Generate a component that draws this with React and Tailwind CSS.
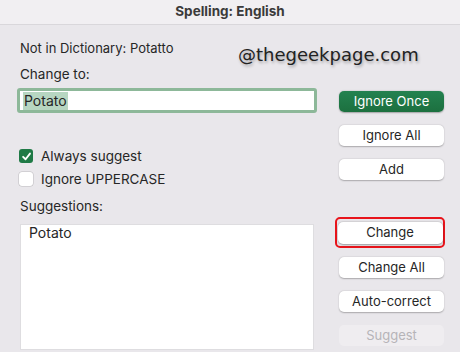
import React from "react";

const font = { fontFamily: "Inter, 'Liberation Sans', Arial, sans-serif" };

function Btn({ children, className = "" }) {
  return (
    <div
      className={`h-[21px] w-[105px] rounded-[5px] bg-white flex items-center justify-center text-[13px] text-[#262626] shadow-[0_0.5px_1.5px_rgba(0,0,0,0.28)] ${className}`}
    >
      {children}
    </div>
  );
}

export default function App() {
  return (
    <div
      className="relative w-[460px] h-[352px] overflow-hidden bg-[#e9e7eb] text-[#262626]"
      style={font}
    >
      {/* title bar */}
      <div className="h-[25px] bg-[#f1eff2] border-b border-[#d9d7db] flex items-center justify-center">
        <span className="text-[13.5px] font-bold text-[#3a3a3a] leading-none">Spelling: English</span>
      </div>

      <div className="flex">
        {/* left column */}
        <div className="ml-[20px] w-[297px] flex flex-col">
          <div className="mt-[15px] text-[13px] leading-[16px]">Not in Dictionary: Potatto</div>
          <div className="mt-[10px] text-[13.5px] leading-[16px]">Change to:</div>
          <div className="mt-[6px] -ml-[3px] w-[300px] h-[25px] rounded-[3px] border-[3px] border-[#8db899] bg-white flex items-center pl-[3px]">
            <span className="bg-[#b7d6c1] text-[14px] leading-[18px] px-[1px]">Potato</span>
          </div>
          <div className="mt-[35px] flex items-center h-[16px]">
            <div className="w-[14px] h-[14px] -ml-[1px] rounded-[3px] bg-[#1f7a46] flex items-center justify-center">
              <svg width="11" height="11" viewBox="0 0 12 12">
                <path d="M2.3 6.3 L5 9 L9.8 2.8" fill="none" stroke="white" strokeWidth="2" strokeLinecap="round" strokeLinejoin="round" />
              </svg>
            </div>
            <span className="ml-[8px] text-[13.5px]">Always suggest</span>
          </div>
          <div className="mt-[7px] flex items-center h-[16px]">
            <div className="w-[14px] h-[14px] -ml-[1px] rounded-[3px] bg-white shadow-[0_0_0_0.5px_rgba(0,0,0,0.2)]" />
            <span className="ml-[8px] text-[13.5px]">Ignore UPPERCASE</span>
          </div>
          <div className="mt-[11px] text-[13.5px] leading-[16px]">Suggestions:</div>
          <div className="mt-[10px] w-[294px] h-[126px] bg-white border border-[#dedde0]">
            <div className="pl-[8px] pt-0 text-[14px] leading-[16px]">Potato</div>
          </div>
        </div>

        {/* right column */}
        <div className="ml-[22px] mt-[66px] flex flex-col">
          <div className="h-[21px] w-[105px] rounded-[5px] bg-gradient-to-b from-[#248250] to-[#1c703f] flex items-center justify-center text-[13px] text-white shadow-[0_0.5px_1.5px_rgba(0,0,0,0.3)]">
            Ignore Once
          </div>
          <Btn className="mt-[13px]">Ignore All</Btn>
          <Btn className="mt-[13px]">Add</Btn>
          <div className="mt-[37px] -ml-[4px] w-[110px] h-[31px] rounded-[5px] border-2 border-[#e8141b] flex items-center justify-center">
            <Btn className="w-[102px] h-[22px] shadow-[0_0.5px_2px_rgba(0,0,0,0.35)]">Change</Btn>
          </div>
          <Btn className="mt-[9px]">Change All</Btn>
          <Btn className="mt-[13px]">Auto-correct</Btn>
          <div className="mt-[13px] h-[21px] w-[105px] rounded-[5px] bg-[#efedf0] flex items-center justify-center text-[13px] text-[#b6b4b8]">
            Suggest
          </div>
        </div>
      </div>

      {/* watermark */}
      <div
        className="absolute left-[238px] top-[42px] text-[18px] leading-[26px] text-[#222] [text-shadow:1px_2px_3px_rgba(0,0,0,0.3)]"
        style={{ fontFamily: "'DejaVu Sans', sans-serif" }}
      >
        @thegeekpage.com
      </div>
    </div>
  );
}
